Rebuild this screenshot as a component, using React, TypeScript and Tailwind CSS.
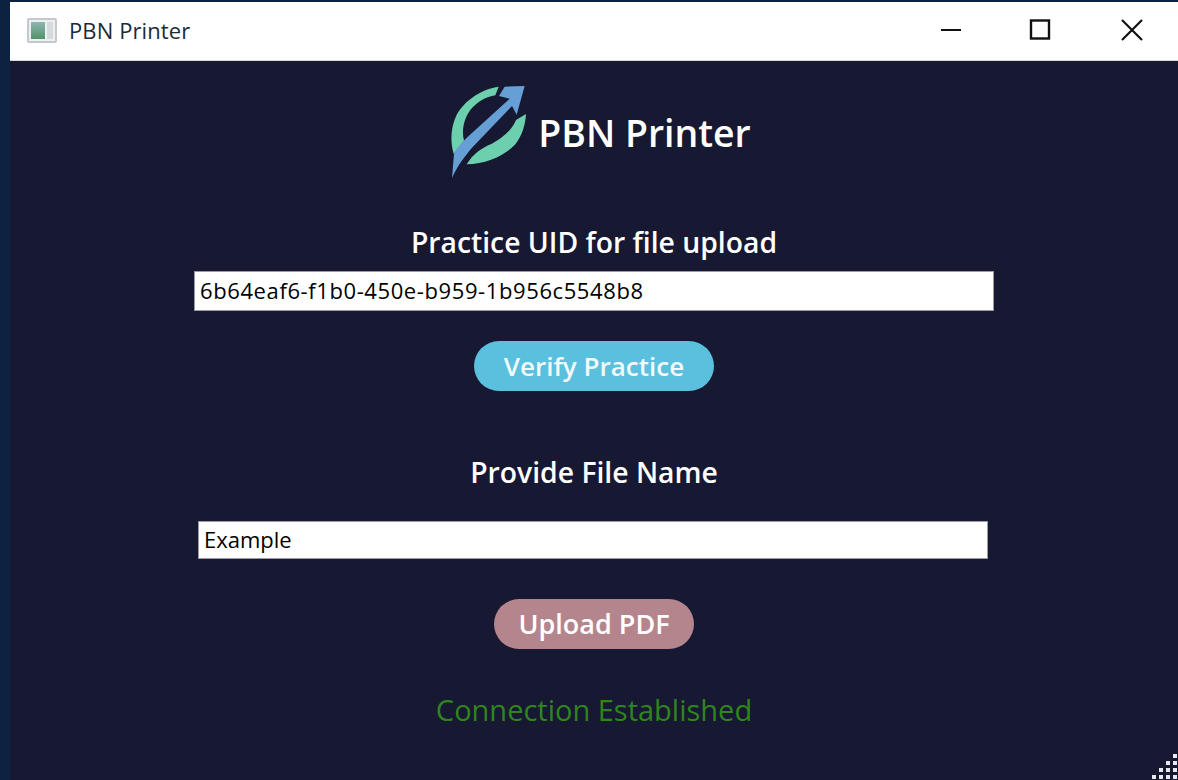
import { FC } from 'react';

const font = { fontFamily: '"Open Sans", "Noto Sans", sans-serif' };

const Logo: FC = () => (
  <svg width="84" height="98" viewBox="0 0 252 294" className="shrink-0 blur-[0.6px]">
    <path
      d="M152 14 C105 20 52 52 26 98 C8 135 6 178 17 216 L48 176 C40 145 48 110 67 84 C87 60 115 44 142 40 Z"
      fill="#6ccfad"
    />
    <path
      d="M234 96 L204 114 C194 140 170 163 130 186 C100 198 75 216 56 247 C110 247 167 224 202 187 C222 161 232 130 234 96 Z"
      fill="#6ccfad"
    />
    <path
      d="M230 12 L170 14 L153 42 L185 50 L62 162 C42 180 28 196 18 215 L12 288 C28 252 48 226 72 197 L192 72 L206 98 Z"
      fill="#659fd6"
    />
  </svg>
);

const TitleBar: FC = () => (
  <div className="flex h-[59px] items-center justify-between border-b border-[#d8d8d8] bg-white pl-[17px]">
    <div className="flex items-center gap-[12px]">
      <div className="mb-[1px] flex h-[25px] w-[30px] gap-[2px] rounded-[2px] border-2 border-[#c4c8cc] bg-[#eef1f1] p-[2px]">
        <div className="w-[14px] bg-gradient-to-b from-[#8fb5b0] to-[#4f9468]" />
        <div className="w-[6px] bg-[#d5dbdb]" />
      </div>
      <span className="mb-[3px] text-[22px] leading-none tracking-[0.1px] text-[#1c2a3a]">PBN Printer</span>
    </div>
    <div className="mb-[3px] flex items-center">
      <button className="flex h-[56px] w-[90px] items-center justify-center">
        <svg width="22" height="22" viewBox="0 0 22 22">
          <path d="M1 11 H21" stroke="#111" strokeWidth="2" />
        </svg>
      </button>
      <button className="flex h-[56px] w-[90px] items-center justify-center pr-[2px]">
        <svg width="22" height="22" viewBox="0 0 22 22">
          <rect x="2" y="1.5" width="18" height="18" fill="none" stroke="#111" strokeWidth="2.4" />
        </svg>
      </button>
      <button className="flex h-[56px] w-[92px] items-center justify-center">
        <svg width="24" height="24" viewBox="0 0 24 24">
          <path d="M2 2 L22 22 M22 2 L2 22" stroke="#111" strokeWidth="2.2" />
        </svg>
      </button>
    </div>
  </div>
);

const ResizeGrip: FC = () => {
  const rows = [[3], [2, 3], [1, 2, 3], [0, 1, 2, 3]];
  return (
    <div className="absolute bottom-[1px] right-[1px] flex flex-col gap-[3px]">
      {rows.map((row, i) => (
        <div key={i} className="flex justify-end gap-[3px]">
          {row.map((c) => (
            <div key={c} className="h-[4px] w-[4px] bg-[#e8e8f0]" />
          ))}
        </div>
      ))}
    </div>
  );
};

export default function App() {
  return (
    <div className="h-[780px] w-[1178px] overflow-hidden bg-[#0b2340] pl-[10px] pt-[2px]" style={font}>
      <TitleBar />
      <div className="relative flex h-[719px] flex-col items-center bg-[#171832] pt-[21px]">
        <div className="ml-[11px] flex h-[98px] items-center gap-[6px]">
          <Logo />
          <h1 className="mt-[4px] text-[37.4px] font-semibold leading-none text-white">PBN Printer</h1>
        </div>

        <label className="mt-[45px] text-[28.3px] font-semibold leading-[34px] text-white">
          Practice UID for file upload
        </label>
        <div className="mt-[12px] flex h-[40px] w-[800px] items-center border border-[#9a9aa6] bg-white pb-[2px] pl-[5px] text-[22px] tracking-[0.6px] text-black">
          6b64eaf6-f1b0-450e-b959-1b956c5548b8
        </div>
        <button className="mt-[30px] h-[50px] w-[240px] rounded-full bg-[#5bc0de] text-[26px] font-semibold text-[#f2fafc]">
          Verify Practice
        </button>

        <label className="mt-[63px] text-[28.3px] font-semibold leading-[36px] text-white">Provide File Name</label>
        <div className="mr-[2px] mt-[31px] flex h-[38px] w-[790px] items-center border border-[#9a9aa6] bg-white pb-[2px] pl-[5px] text-[22px] text-black">
          Example
        </div>
        <button className="mt-[40px] h-[50px] w-[200px] rounded-full bg-[#b5858e] text-[27px] font-semibold text-white">
          Upload PDF
        </button>

        <p className="mt-[39px] text-[29px] font-medium leading-[44px] text-[#2f851c]">Connection Established</p>

        <ResizeGrip />
      </div>
    </div>
  );
}
